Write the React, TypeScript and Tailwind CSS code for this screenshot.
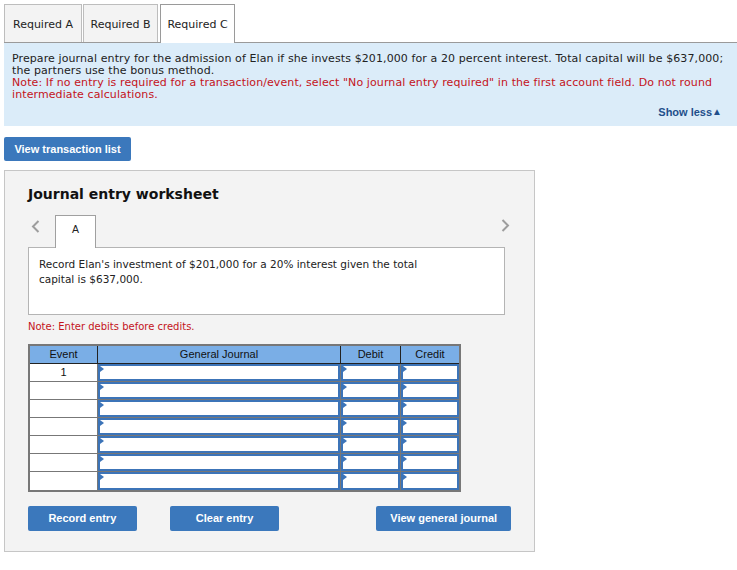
import React from 'react';

const verdana = { fontFamily: '"DejaVu Sans", Verdana, sans-serif' };
const arial = { fontFamily: '"Liberation Sans", Arial, sans-serif' };

function InputCell() {
  return (
    <div className="relative h-full w-full border-2 border-[#3c74b8] bg-white">
      <span className="absolute left-0 top-0 h-0 w-0 border-y-[3px] border-l-[4px] border-y-transparent border-l-[#3c74b8]" />
    </div>
  );
}

export default function App() {
  const rows = [0, 1, 2, 3, 4, 5, 6];
  return (
    <div className="min-h-[570px] bg-white pt-1 text-[11px] text-[#222]" style={verdana}>
      {/* tabs */}
      <div className="flex pl-1 text-[11px]">
        <div className="flex h-[38px] w-[78px] items-center justify-center border border-b-0 border-[#bdbdbd] bg-[#f3f3f3] pt-[3px]">Required A</div>
        <div className="ml-px flex h-[38px] w-[75px] items-center justify-center border border-b-0 border-[#bdbdbd] bg-[#f3f3f3] pt-[3px]">Required B</div>
        <div className="relative z-10 ml-[2px] -mb-px flex h-[39px] w-[75px] items-center justify-center border border-b-0 border-[#9a9a9a] bg-white pt-[3px] pb-px">Required C</div>
      </div>
      <div className="ml-1 border-t border-[#9a9a9a] bg-[#dbecf9] pl-2 pr-3 pt-[10px] pb-[8px] text-[11px] leading-[12px] tracking-[0.1px]">
        <p>
          Prepare journal entry for the admission of Elan if she invests $201,000 for a 20 percent interest. Total capital will be $637,000; the partners use the bonus method.
        </p>
        <p className="text-[#c4131b]">
          Note: If no entry is required for a transaction/event, select "No journal entry required" in the first account field. Do not round intermediate calculations.
        </p>
        <div className="mt-[5px] flex items-center justify-end pr-[3px] text-[11px] font-bold tracking-normal text-[#1f4f8b]" style={arial}>
          Show less<span className="text-[10px] leading-none">▲</span>
        </div>
      </div>

      <div className="px-1">
        <button className="mt-[11px] h-6 w-[127px] rounded-[2px] bg-[#3b78bc] text-[11px] font-bold text-white" style={arial}>View transaction list</button>

        {/* worksheet */}
        <div className="mt-[9px] w-[531px] border border-[#c6c6c6] bg-[#f3f3f3] px-[23px] pt-[13px] pb-[20px]">
          <h2 className="text-[14px] font-bold leading-[20px] text-[#111]">Journal entry worksheet</h2>
          <div className="mt-[11px] flex items-end">
            <span className="mb-[14px] ml-[3px] w-[24px] text-[#9d9d9d]">
              <svg width="9" height="13" viewBox="0 0 9 13"><path d="M7.5 1 L2 6.5 L7.5 12" fill="none" stroke="currentColor" strokeWidth="2" /></svg>
            </span>
            <div className="relative z-10 -mb-px flex h-[33px] w-[41px] items-start justify-center border border-b-0 border-[#a0a0a0] bg-white pt-[6px] text-[10.5px]" style={arial}>A</div>
            <span className="mb-[15px] ml-auto mr-[1px] text-[#9d9d9d]">
              <svg width="9" height="13" viewBox="0 0 9 13"><path d="M1.5 1 L7 6.5 L1.5 12" fill="none" stroke="currentColor" strokeWidth="2" /></svg>
            </span>
          </div>
          <div className="h-[68px] w-[477px] border border-[#b4b4b4] bg-white px-[10px] pt-[9px] text-[10.5px] leading-[15px]">
            <p className="max-w-[405px]">Record Elan's investment of $201,000 for a 20% interest given the total capital is $637,000.</p>
          </div>
          <p className="mt-[4px] text-[10px] text-[#c4131b]">Note: Enter debits before credits.</p>

          {/* table */}
          <div className="mt-[10px] grid w-fit grid-cols-[68px_243px_60px_58px] border-2 border-[#777] text-[11px] text-[#111]" style={arial}>
            <div className="flex h-[18px] items-center justify-center border-r border-b border-[#222] bg-[#7aaee6]">Event</div>
            <div className="flex h-[18px] items-center justify-center border-r border-b border-[#222] bg-[#7aaee6]">General Journal</div>
            <div className="flex h-[18px] items-center justify-center border-r border-b border-[#222] bg-[#7aaee6]">Debit</div>
            <div className="flex h-[18px] items-center justify-center border-b border-[#222] bg-[#7aaee6]">Credit</div>
            {rows.map((r) => (
              <React.Fragment key={r}>
                <div className={`flex h-[18px] items-center justify-center border-r border-[#777] bg-white ${r < 6 ? 'border-b' : ''}`}>
                  {r === 0 ? '1' : ''}
                </div>
                <div className={`h-[18px] border-r border-[#777] ${r < 6 ? 'border-b' : ''}`}><InputCell /></div>
                <div className={`h-[18px] border-r border-[#777] ${r < 6 ? 'border-b' : ''}`}><InputCell /></div>
                <div className={`h-[18px] border-[#777] ${r < 6 ? 'border-b' : ''}`}><InputCell /></div>
              </React.Fragment>
            ))}
          </div>

          <div className="mt-[14px] flex text-[11px] font-bold text-white" style={arial}>
            <button className="h-[25px] w-[109px] rounded-[2px] bg-[#3b78bc]">Record entry</button>
            <button className="ml-[33px] h-[25px] w-[110px] rounded-[2px] bg-[#3b78bc]">Clear entry</button>
            <button className="ml-[97px] h-[25px] w-[135px] rounded-[2px] bg-[#3b78bc]">View general journal</button>
          </div>
        </div>
      </div>
    </div>
  );
}
